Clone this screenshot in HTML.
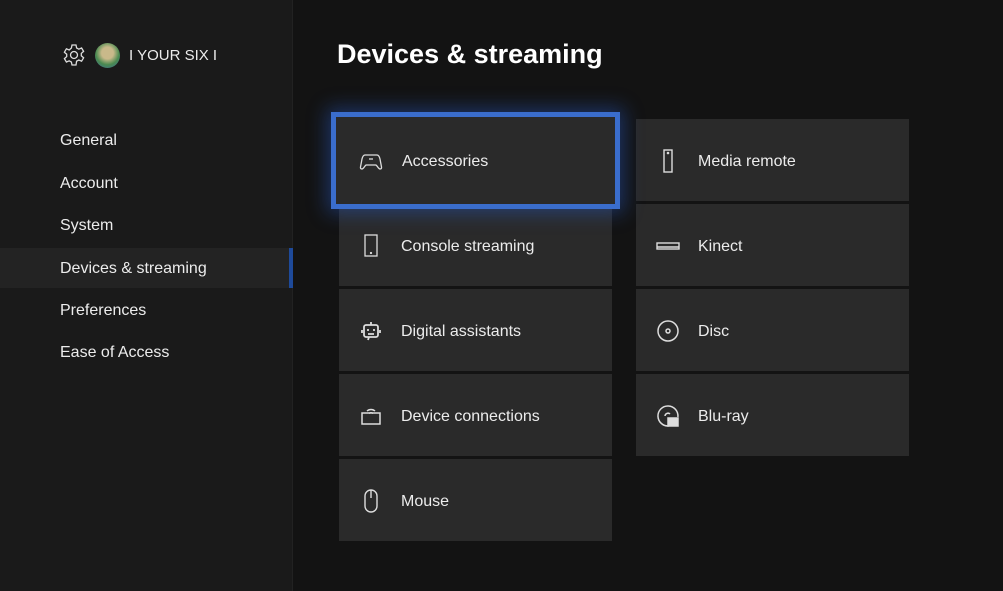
<!DOCTYPE html>
<html><head><style>
*{margin:0;padding:0;box-sizing:border-box}
body{width:1003px;height:591px;background:#131313;font-family:"Liberation Sans",sans-serif;color:#ececec;position:relative;overflow:hidden}
.side{position:absolute;left:0;top:0;width:293px;height:591px;background:#1a1a1a;border-right:1px solid #222}
.nav{position:absolute;left:60px;font-size:16px}
.sel{position:absolute;left:0;top:248px;width:293px;height:40px;background:#232323}
.bar{position:absolute;left:289px;top:248px;width:4px;height:40px;background:#1e4a9a}
h1{position:absolute;left:337px;top:39px;font-size:27px;font-weight:bold;color:#fff}
.t{position:absolute;width:273px;height:82px;background:#2a2a2a;font-size:16px}
.t span{position:absolute;left:62px;top:34px}
.t svg{position:absolute;left:20px;top:30px}
.focus{position:absolute;left:331px;top:112px;width:289px;height:97px;border:5px solid #3a6dcc;box-shadow:0 0 18px 4px rgba(40,90,200,.45);background:#2a2a2a;z-index:5}
.focus svg{position:absolute;left:23px;top:33px}
.focus span{position:absolute;left:66px;top:36px;font-size:16px}
</style></head><body>
<div class="side"></div>
<div class="sel"></div><div class="bar"></div>
<svg style="position:absolute;left:62px;top:43px" width="24" height="24" viewBox="0 0 24 24" fill="none" stroke="#ddd" stroke-width="1.3"><circle cx="12" cy="12" r="3.5"/><path d="M10 2h4l.6 3 2.2 1.2 2.8-1.2 2 3.4-2.3 2v2.4l2.3 2-2 3.4-2.8-1.2-2.2 1.2L14 22h-4l-.6-3-2.2-1.2-2.8 1.2-2-3.4 2.3-2v-2.4l-2.3-2 2-3.4 2.8 1.2L9.4 5z"/></svg>
<div style="position:absolute;left:95px;top:43px;width:25px;height:25px;border-radius:50%;background:radial-gradient(circle at 50% 40%,#c9b98a 30%,#4a8a50 60%,#3a6aa0)"></div>
<div style="position:absolute;left:129px;top:47px;font-size:15px">I YOUR SIX I</div>
<div class="nav" style="top:132px">General</div>
<div class="nav" style="top:175px">Account</div>
<div class="nav" style="top:217px">System</div>
<div class="nav" style="top:260px">Devices &amp; streaming</div>
<div class="nav" style="top:302px">Preferences</div>
<div class="nav" style="top:344px">Ease of Access</div>
<h1>Devices &amp; streaming</h1>
<div class="focus"><svg width="24" height="24" viewBox="0 0 24 24" fill="none" stroke="#ddd" stroke-width="1.3"><path d="M6 5h12q2 0 3 4l1.5 8q.3 2-1.5 2-1 0-3-3l-1-1H7l-1 1q-2 3-3 3-1.8 0-1.5-2L3 9q1-4 3-4z"/><path d="M10 9h4"/></svg><span>Accessories</span></div>
<div class="t" style="left:339px;top:204px"><svg width="24" height="24" viewBox="0 0 24 24" fill="none" stroke="#ddd" stroke-width="1.3"><rect x="6" y="1" width="12" height="21"/><circle cx="12" cy="19" r=".5" fill="#ddd"/></svg><span>Console streaming</span></div>
<div class="t" style="left:339px;top:289px"><svg width="24" height="24" viewBox="0 0 24 24" fill="none" stroke="#ddd" stroke-width="1.8"><rect x="5" y="6" width="14" height="12" rx="2"/><path d="M12 3v3M3 11v3M21 11v3M9 10v2M15 10v2M9 15h6M10 18l-1 3"/></svg><span>Digital assistants</span></div>
<div class="t" style="left:339px;top:374px"><svg width="24" height="24" viewBox="0 0 24 24" fill="none" stroke="#ddd" stroke-width="1.5"><path d="M3 9h18v11H3z"/><path d="M8 7a6 6 0 0 1 8 0M10 9.5a3 3 0 0 1 4 0"/></svg><span>Device connections</span></div>
<div class="t" style="left:339px;top:459px"><svg width="24" height="24" viewBox="0 0 24 24" fill="none" stroke="#ddd" stroke-width="1.4"><rect x="6" y="1" width="12" height="22" rx="6"/><path d="M12 1v8"/></svg><span>Mouse</span></div>
<div class="t" style="left:636px;top:119px"><svg width="24" height="24" viewBox="0 0 24 24" fill="none" stroke="#ddd" stroke-width="1.4"><rect x="8" y="1" width="8" height="22"/><circle cx="12" cy="4" r=".6" fill="#ddd"/></svg><span>Media remote</span></div>
<div class="t" style="left:636px;top:204px"><svg width="24" height="24" viewBox="0 0 24 24" fill="none" stroke="#ddd" stroke-width="1.4"><rect x="1" y="9" width="22" height="6"/><path d="M1 13h22"/></svg><span>Kinect</span></div>
<div class="t" style="left:636px;top:289px"><svg width="24" height="24" viewBox="0 0 24 24" fill="none" stroke="#ddd" stroke-width="1.5"><circle cx="12" cy="12" r="10"/><circle cx="12" cy="12" r="2"/></svg><span>Disc</span></div>
<div class="t" style="left:636px;top:374px"><svg width="24" height="24" viewBox="0 0 24 24" fill="none" stroke="#ddd" stroke-width="1.5"><path d="M13 21.9A10 10 0 1 1 21.9 13"/><path d="M9 12a3 3 0 0 1 5-2"/><rect x="12" y="14" width="10" height="8" fill="#ddd"/></svg><span>Blu-ray</span></div>
</body></html>
